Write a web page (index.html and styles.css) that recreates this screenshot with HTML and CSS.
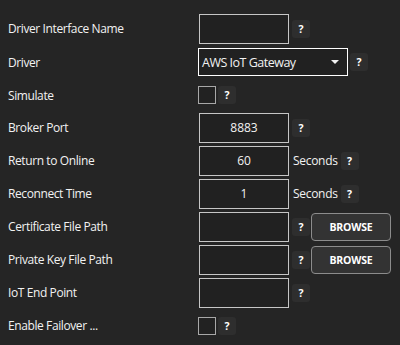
FILE: index.html
```html
<!DOCTYPE html>
<html lang="en">
<head>
<meta charset="UTF-8" />
<title>Driver Settings</title>
<link rel="stylesheet" href="styles.css">
</head>
<body>
    <div class="form">
        <div class="row r1">
            <div class="label">Driver Interface Name</div>
            <div class="field"><div class="box"></div><span class="help">?</span></div>
        </div>
        <div class="row r2">
            <div class="label">Driver</div>
            <div class="field">
                <div class="select">AWS IoT Gateway<span class="caret"></span></div>
                <span class="help">?</span>
            </div>
        </div>
        <div class="row r3">
            <div class="label">Simulate</div>
            <div class="field"><div class="check"></div><span class="help">?</span></div>
        </div>
        <div class="row">
            <div class="label">Broker Port</div>
            <div class="field"><div class="box">8883</div><span class="help">?</span></div>
        </div>
        <div class="row">
            <div class="label">Return to Online</div>
            <div class="field"><div class="box">60</div><span class="unit">Seconds</span><span class="help">?</span></div>
        </div>
        <div class="row">
            <div class="label">Reconnect Time</div>
            <div class="field"><div class="box">1</div><span class="unit">Seconds</span><span class="help">?</span></div>
        </div>
        <div class="row">
            <div class="label">Certificate File Path</div>
            <div class="field"><div class="box"></div><span class="help">?</span><button class="browse">BROWSE</button></div>
        </div>
        <div class="row">
            <div class="label">Private Key File Path</div>
            <div class="field"><div class="box"></div><span class="help">?</span><button class="browse">BROWSE</button></div>
        </div>
        <div class="row">
            <div class="label">IoT End Point</div>
            <div class="field"><div class="box"></div><span class="help">?</span></div>
        </div>
        <div class="row">
            <div class="label">Enable Failover ...</div>
            <div class="field"><div class="check"></div><span class="help">?</span></div>
        </div>
    </div>
</body>
</html>
```

FILE: styles.css
```css
body, html {
    margin: 0;
    padding: 0;
    height: 100%;
    overflow: hidden;
    background: #252525;
    color: #f2f2f2;
    font-family: "Open Sans", "Noto Sans", sans-serif;
    font-size: 12px;
}

.form {
    display: flex;
    flex-direction: column;
    padding: 12px 0 0 8px;
}

.row {
    display: flex;
    align-items: center;
    height: 33px;
}

.r2 {
    height: 34px;
}

.r3 {
    height: 32px;
}

.label {
    width: 190px;
    letter-spacing: -0.4px;
}

.field {
    display: flex;
    align-items: center;
}

.box {
    box-sizing: border-box;
    width: 90px;
    height: 30px;
    margin-left: 1px;
    border: 1px solid #c6c6c6;
    background: #212121;
    display: flex;
    align-items: center;
    justify-content: center;
}

.select {
    box-sizing: border-box;
    width: 150px;
    height: 28px;
    border: 1px solid #ffffff;
    background: #212121;
    display: flex;
    align-items: center;
    padding-left: 3px;
    position: relative;
    font-size: 12.5px;
    letter-spacing: -0.5px;
}

.caret {
    position: absolute;
    right: 8px;
    top: 11px;
    width: 0;
    height: 0;
    border-left: 4px solid transparent;
    border-right: 4px solid transparent;
    border-top: 4px solid #f2f2f2;
}

.check {
    box-sizing: border-box;
    width: 18px;
    height: 18px;
    border: 1px solid #a8a8a8;
    background: #222;
}

.help {
    width: 18px;
    height: 18px;
    margin-left: 3px;
    border-radius: 3px;
    background: #2e2e2e;
    display: flex;
    align-items: center;
    justify-content: center;
    font-size: 10.5px;
    font-weight: 700;
    color: #fff;
}

.check + .help,
.select + .help {
    margin-left: 2px;
}

.unit {
    margin-left: 4px;
    letter-spacing: -0.3px;
}

.browse {
    box-sizing: border-box;
    width: 80px;
    height: 28px;
    margin-left: 1px;
    border: 1px solid #8c8c8c;
    border-radius: 4px;
    background: #333333;
    color: #fff;
    font-family: "Open Sans", sans-serif;
    font-size: 10.5px;
    font-weight: 700;
    letter-spacing: -0.2px;
    padding: 0;
}
```
